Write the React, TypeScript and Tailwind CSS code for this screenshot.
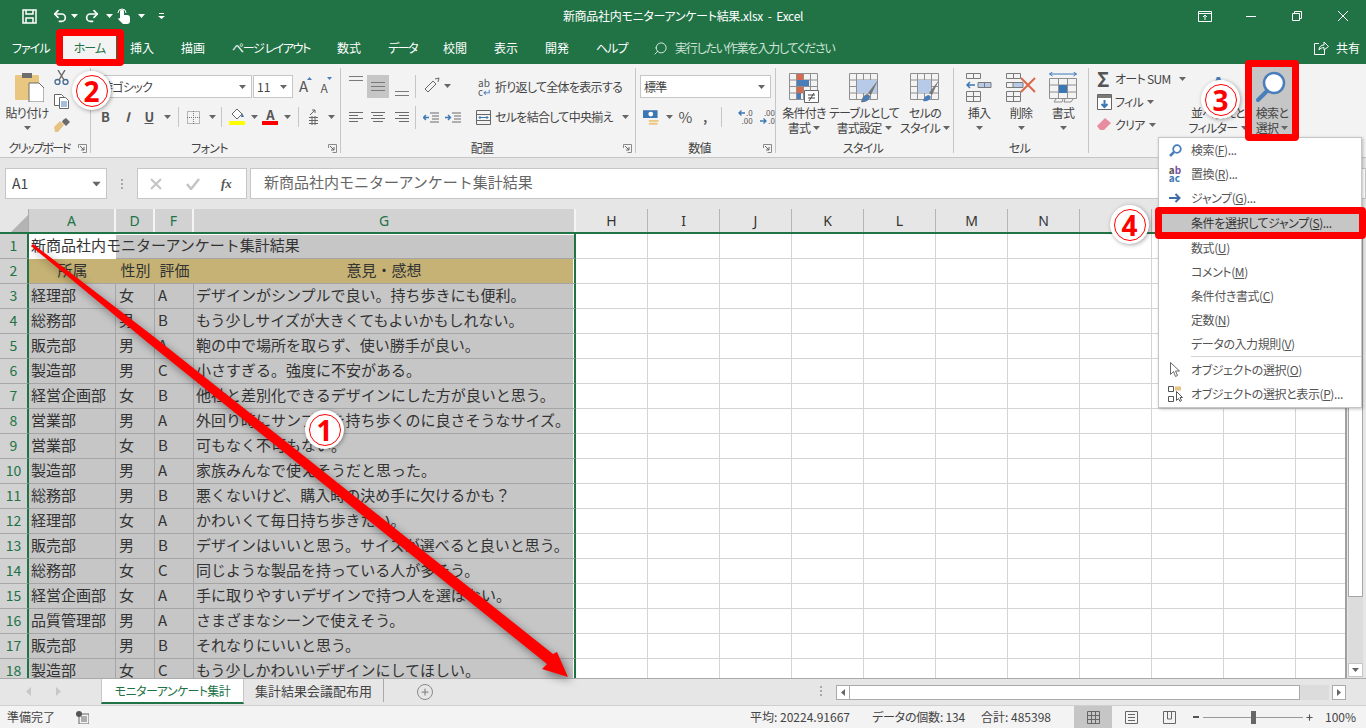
import { ReactNode } from 'react';
import { Undo2, Redo2, Search, Plus } from 'lucide-react';

const jp = '[font-family:"Noto_Sans_CJK_JP","Noto_Sans",sans-serif]';

function Caret({ color = '#666', className = '' }: { color?: string; className?: string }) {
  return (
    <svg width="7" height="4" viewBox="0 0 7 4" className={`shrink-0 ${className}`}>
      <path d="M0 0h7L3.5 4z" fill={color} />
    </svg>
  );
}

function Launcher() {
  return (
    <svg width="9" height="9" viewBox="0 0 9 9" className="shrink-0">
      <path d="M.5 4V.5H8.5V8.5H4.5" fill="none" stroke="#8a8a8a" />
      <path d="M2 2l4 4M6 3v3H3" fill="none" stroke="#666" />
    </svg>
  );
}

function Group({ w, label, labelClass = '', launcher, children }: { w: string; label: string; labelClass?: string; launcher?: boolean; children: ReactNode }) {
  return (
    <div className={`${w} flex h-full shrink-0`}>
      <div className="flex min-w-0 flex-1 flex-col">
        <div className="min-h-0 flex-1">{children}</div>
        <div className="flex h-[18px] items-center pr-[3px]">
          <span className={`flex-1 text-center text-[12px] text-[#444] ${labelClass}`}>{label}</span>
          {launcher && <Launcher />}
        </div>
      </div>
      <div className="my-[4px] w-px bg-[#c6c6c6]" />
    </div>
  );
}

function Line({ w, h = 1, c = '#7a7a7a' }: { w: number; h?: number; c?: string }) {
  return <div style={{ width: w, height: h, backgroundColor: c }} />;
}

// three-line alignment glyph
function AlignIcon({ kind }: { kind: 'left' | 'center' | 'right' }) {
  const xs = kind === 'left' ? [1, 1, 1, 1] : kind === 'center' ? [1, 3, 1, 3] : [1, 5, 1, 5];
  const ws = kind === 'left' ? [14, 9, 14, 9] : kind === 'center' ? [14, 10, 14, 10] : [14, 10, 14, 10];
  return (
    <svg width="16" height="13" viewBox="0 0 16 13">
      {xs.map((x, i) => (
        <rect key={i} x={x} y={1 + i * 3} width={ws[i]} height="1" fill="#6a6a6a" />
      ))}
    </svg>
  );
}

function Qat() {
  return (
    <div className="flex-1">
      <div className="flex items-center pl-[22px] text-white">
        <svg width="15" height="15" viewBox="0 0 15 15" fill="none" stroke="#fff" strokeWidth="1.5">
          <path d="M1 1h13v13H1z" />
          <path d="M4 1v4h7V1M4 14V9h7v5" />
        </svg>
        <Undo2 size={16} strokeWidth={2.5} className="ml-[15px]" />
        <Caret color="#fff" className="ml-[3px]" />
        <Redo2 size={16} strokeWidth={2.5} className="ml-[6px]" />
        <Caret color="#fff" className="ml-[6px]" />
        <svg width="15" height="16" viewBox="0 0 15 16" className="ml-[3px]" fill="#fff">
          <path d="M4 3.500a2 2 0 014 0V7h3a3 3 0 013 3v3a3 3 0 01-3 3H7L2 11l1-1 1 .5z" />
          <path d="M2 5a4 4 0 018 0" fill="none" stroke="#fff" />
        </svg>
        <Caret color="#fff" className="ml-[7px]" />
        <svg width="7" height="6" viewBox="0 0 7 6" className="ml-[13px]">
          <path d="M1 0h5v1H1zM0 3h7L3.5 6z" fill="#fff" />
        </svg>
      </div>
    </div>
  );
}

function WindowButtons() {
  return (
    <div className="flex flex-1 justify-end">
      {[
        <svg key="r" width="14" height="11" viewBox="0 0 14 11" fill="none" stroke="#fff"><path d="M.5.5h13v10H.5zM.5 2.5h13M7 9V4.5M5 6l2-2 2 2" /></svg>,
        <svg key="m" width="10" height="1" viewBox="0 0 10 1"><path d="M0 0h10v1H0z" fill="#fff" /></svg>,
        <svg key="x" width="10" height="10" viewBox="0 0 10 10" fill="none" stroke="#fff"><path d="M.5 2.5h7v7h-7zM2.5 2.5v-2h7v7h-2" /></svg>,
        <svg key="c" width="10" height="10" viewBox="0 0 10 10" fill="none" stroke="#fff"><path d="M0 0l10 10M10 0L0 10" /></svg>,
      ].map((icon, i) => (
        <div key={i} className="flex h-[30px] w-[46px] items-center justify-center">
          {icon}
        </div>
      ))}
    </div>
  );
}

const tabNames = [
  { n: '挿入', w: 'w-[24px]', t: 'tracking-normal' },
  { n: '描画', w: 'w-[24px]', t: 'tracking-normal' },
  { n: 'ページ レイアウト', w: 'w-[78px]', t: 'tracking-[-1.4px]' },
  { n: '数式', w: 'w-[24px]', t: 'tracking-normal' },
  { n: 'データ', w: 'w-[28px]', t: 'tracking-[-1.5px]' },
  { n: '校閲', w: 'w-[24px]', t: 'tracking-normal' },
  { n: '表示', w: 'w-[24px]', t: 'tracking-normal' },
  { n: '開発', w: 'w-[24px]', t: 'tracking-normal' },
  { n: 'ヘルプ', w: 'w-[30px]', t: 'tracking-[-1px]' },
];

function Tabs() {
  return (
    <div className="flex h-[32px] items-center bg-[#217346] text-[12px] text-white">
      <span className="ml-[12px] w-[33px] whitespace-nowrap tracking-[-1px]">ファイル</span>
      <div className="ml-[18px] flex h-[24px] w-[53px] items-center justify-center bg-[#f3f3f3] tracking-[-1px] text-[#217346]">ホーム</div>
      <div className="ml-[14px] flex gap-[27px] whitespace-nowrap">
        {tabNames.map((n) => (
          <span key={n.n} className={`${n.w} ${n.t}`}>{n.n}</span>
        ))}
      </div>
      <Search size={15} strokeWidth={1.5} className="ml-[27px] -scale-x-100 text-[#dfeee6]" />
      <span className="ml-[7px] tracking-[-1.2px] text-[#cfe3d8]">実行したい作業を入力してください</span>
      <div className="ml-auto mr-[6px] flex items-center gap-[7px] tracking-normal">
        <svg width="15" height="14" viewBox="0 0 15 14" fill="none" stroke="#fff">
          <path d="M5 2.5H.5v11h10V9M5 9c0-3 2-5 5-5V1l4.500 4.500L10 9V6.500C8 6.500 6 7.500 5 9z" />
        </svg>
        <span>共有</span>
      </div>
    </div>
  );
}

function ClipboardGroup() {
  return (
    <Group w="w-[91px]" label="クリップボード" labelClass="tracking-[-1.8px]" launcher>
      <div className="flex h-full">
        <div className="flex w-[54px] flex-col items-center pt-[8px]">
          <svg width="29" height="30" viewBox="0 0 29 30" className="ml-[4px]">
            <rect x="0" y="3" width="24" height="25" rx="1" fill="#eac781" />
            <path d="M7 1h10v5H7z" fill="#6d6d6d" />
            <path d="M14 11h10l5 5v14H14z" fill="#fff" stroke="#6d6d6d" />
          </svg>
          <span className="mt-[3px] whitespace-nowrap text-[12px] leading-[16px] text-[#444]">貼り付け</span>
          <Caret className="mt-[5px]" />
        </div>
        <div className="flex flex-col gap-[9px] pt-[6px]">
          <svg width="15" height="15" viewBox="0 0 15 15" fill="none" stroke="#4a6f96" strokeWidth="1.4">
            <circle cx="3.500" cy="12" r="2.500" /><circle cx="11.500" cy="12" r="2.500" />
            <path d="M5 10L11 0M10 10L4 0" stroke="#666" />
          </svg>
          <svg width="15" height="15" viewBox="0 0 15 15" fill="#fff" stroke="#666">
            <path d="M.5.5h7l2 2v9h-9z" />
            <path d="M5.500 3.500h6l3 3v8h-9z" />
            <path d="M7 8h6M7 10h6M7 12h6" stroke="#4a7ebb" />
          </svg>
          <svg width="16" height="14" viewBox="0 0 16 14">
            <path d="M0 9l6-6 4 4-6 7H1z" fill="#e6c283" />
            <path d="M9 2l3-2 4 4-3 3-1 1-4-4z" fill="#6a6a6a" />
          </svg>
        </div>
      </div>
    </Group>
  );
}

function FontGroup() {
  return (
    <Group w="w-[250px]" label="フォント" launcher>
      <div className="flex h-[39px] items-start pl-[9px] pt-[11px]">
        <div className="flex h-[23px] w-[152px] items-center justify-between border border-[#c6c6c6] bg-white pr-[5px] text-[12px] text-[#444]">
          <span>游ゴシック</span>
          <Caret />
        </div>
        <div className="ml-px flex h-[23px] w-[40px] items-center justify-between border border-[#c6c6c6] bg-white px-[3px] pr-[5px] text-[12px] tracking-normal text-[#444]">
          11
          <Caret />
        </div>
        <span className="ml-[6px] text-[15px] leading-[22px] text-[#555]">A</span>
        <svg width="5" height="3" viewBox="0 0 5 3" className="mt-[2px]"><path d="M0 3h5L2.500 0z" fill="#4a7ebb" /></svg>
        <span className="ml-[8px] pt-[3px] text-[12px] leading-[20px] text-[#555]">A</span>
        <svg width="5" height="3" viewBox="0 0 5 3" className="mt-[2px]"><path d="M0 0h5L2.500 3z" fill="#4a7ebb" /></svg>
      </div>
      <div className="flex h-[28px] items-center pl-[3px] text-[#555]">
        <span className="w-[22px] text-center text-[13px] font-bold">B</span>
        <span className="w-[22px] text-center text-[13px] font-bold italic">I</span>
        <span className="w-[22px] text-center text-[13px] font-bold underline">U</span>
        <Caret className="ml-[4px]" />
        <div className="ml-[7px] mr-[8px] h-[20px] w-px bg-[#c6c6c6]" />
        <svg width="13" height="13" viewBox="0 0 13 13" fill="none" stroke="#777" strokeDasharray="1 1"><path d="M.5.5h12v12H.5zM6.500 0v13M0 6.500h13" /></svg>
        <Caret className="ml-[9px]" />
        <div className="ml-[5px] mr-[7px] h-[20px] w-px bg-[#c6c6c6]" />
        <div className="flex flex-col items-center">
          <svg width="16" height="11" viewBox="0 0 16 11"><path d="M3 5l5-5 5 5-5 5z" fill="#fff" stroke="#666" /><path d="M13 4l2 4h-3z" fill="#3c6ea5" /></svg>
          <div className="mt-px h-[4px] w-[16px] bg-[#ffff00]" />
        </div>
        <Caret className="ml-[6px]" />
        <div className="ml-[4px] flex flex-col items-center">
          <span className="text-[13px] font-bold leading-[11px] text-[#555]">A</span>
          <div className="mt-px h-[4px] w-[16px] bg-[#ff0000]" />
        </div>
        <Caret className="ml-[6px]" />
        <div className="ml-[7px] mr-[10px] h-[20px] w-px bg-[#c6c6c6]" />
        <svg width="9" height="16" viewBox="0 0 9 16" fill="none" stroke="#666"><path d="M1 6l5-5M3 1h3v3M0 8.500h9M0 11.500h9M0 14.500h9M3 7v9M6 7v9" /></svg>
        <Caret className="ml-[10px]" />
      </div>
    </Group>
  );
}

function AlignGroup() {
  return (
    <Group w="w-[295px]" label="配置" launcher>
      <div className="flex h-full">
        <div className="flex w-[135px] flex-col pl-[4px]">
          <div className="flex h-[39px] items-start pt-[11px]">
            <div className="flex w-[22px] justify-center pt-[1px]"><div className="flex flex-col gap-[3px]"><Line w={14} /><Line w={14} /></div></div>
            <div className="flex h-[23px] w-[22px] flex-col items-center justify-center gap-[3px] bg-[#c6c6c6]"><Line w={14} /><Line w={14} /><Line w={14} /></div>
            <div className="flex h-[23px] w-[26px] flex-col items-center justify-end gap-[3px] pb-[2px]"><Line w={14} /><Line w={14} /></div>
            <div className="ml-[0px] mr-[7px] h-[23px] w-px bg-[#c6c6c6]" />
            <svg width="17" height="17" viewBox="0 0 17 17" fill="none" stroke="#666" className="mt-[2px]"><path d="M2 12l8-8 3 3-8 8zM12 2l4-1-1 4" /></svg>
            <Caret className="ml-[4px] mt-[9px]" />
          </div>
          <div className="flex h-[28px] items-center">
            <div className="flex w-[22px] justify-center"><AlignIcon kind="left" /></div>
            <div className="flex w-[22px] justify-center"><AlignIcon kind="center" /></div>
            <div className="flex w-[26px] justify-center"><AlignIcon kind="right" /></div>
            <div className="mr-[7px] h-[23px] w-px bg-[#c6c6c6]" />
            <svg width="16" height="11" viewBox="0 0 16 11" fill="none"><path d="M7 1h9M9 4h7M9 7h7M7 10h9" stroke="#6a6a6a" /><path d="M6 5.500H1M3 3L.5 5.500 3 8" stroke="#3c77b5" strokeWidth="1.4" /></svg>
            <svg width="16" height="11" viewBox="0 0 16 11" fill="none" className="ml-[6px]"><path d="M7 1h9M9 4h7M9 7h7M7 10h9" stroke="#6a6a6a" /><path d="M0 5.500h5M3 3l2.500 2.500L3 8" stroke="#3c77b5" strokeWidth="1.4" /></svg>
          </div>
        </div>
        <div className="mt-[8px] flex h-[60px] flex-col">
          <div className="flex h-[30px] items-center whitespace-nowrap pl-[2px] text-[12px] text-[#444]">
            <span className="w-[17px] text-[10px] leading-[9px] tracking-normal text-[#555]">ab<br />c<span className="text-[#3c77b5]">↵</span></span>
            折り返して全体を表示する
          </div>
          <div className="flex h-[30px] items-center whitespace-nowrap text-[12px] text-[#444]">
            <svg width="15" height="15" viewBox="0 0 15 15" fill="none" className="mr-[4px] shrink-0"><path d="M.5.5h14v14H.5zM.5 4.500h14M.5 10.500h14" stroke="#666" /><path d="M3 7.500h9M4.500 6L3 7.500 4.500 9M10.500 6L12 7.500 10.500 9" stroke="#3c77b5" /></svg>
            セルを結合して中央揃え
            <Caret className="ml-[9px]" />
          </div>
        </div>
      </div>
    </Group>
  );
}

function DecimalIcon({ top, bottom, dir }: { top: string; bottom: string; dir: 'l' | 'r' }) {
  return (
    <div className="flex w-[17px] flex-col text-[8px] leading-[8px] tracking-normal text-[#555]">
      <div className="flex items-center justify-end gap-px">
        {dir === 'l' && <svg width="7" height="6" viewBox="0 0 7 6" fill="none" stroke="#3c77b5" strokeWidth="1.3"><path d="M7 3H1M3.500 .5L1 3l2.500 2.500" /></svg>}
        {top}
      </div>
      <div className="flex items-center justify-end gap-px">
        {dir === 'r' && <svg width="7" height="6" viewBox="0 0 7 6" fill="none" stroke="#3c77b5" strokeWidth="1.3"><path d="M0 3h6M3.500 .5L6 3 3.500 5.500" /></svg>}
        {bottom}
      </div>
    </div>
  );
}

function NumberGroup() {
  return (
    <Group w="w-[140px]" label="数値" launcher>
      <div className="flex h-[39px] items-start pl-[4px] pt-[11px]">
        <div className="flex h-[23px] w-[131px] items-center justify-between border border-[#c6c6c6] bg-white px-[3px] pr-[5px] text-[12px] text-[#444]">
          標準
          <Caret />
        </div>
      </div>
      <div className="flex h-[28px] items-center pl-[7px] text-[#555]">
        <svg width="17" height="17" viewBox="0 0 17 17"><rect x="0" y="1" width="15" height="8" fill="#3c77b5" /><circle cx="8" cy="5" r="2.500" fill="#fff" /><path d="M6 11h10v2H6zM6 14h9v2H6z" fill="#ecc57f" /></svg>
        <Caret className="ml-[6px]" />
        <span className="ml-[6px] text-[15px] tracking-normal">%</span>
        <span className="ml-[11px] w-[4px] text-[12px] font-bold leading-none">,</span>
        <div className="mx-[14px] h-[20px] w-px bg-[#c6c6c6]" />
        <DecimalIcon top=".0" bottom=".00" dir="l" />
        <div className="w-[6px]" />
        <DecimalIcon top=".00" bottom=".0" dir="r" />
      </div>
    </Group>
  );
}

function BigButton({ icon, l1, l2, caret = true, w }: { icon: ReactNode; l1: string; l2?: string; caret?: boolean; w: string }) {
  return (
    <div className={`${w} flex flex-col items-center pt-[7px] text-[12px] leading-[15px] text-[#444]`}>
      <div className="flex h-[33px] items-center">{icon}</div>
      <span className="mt-px whitespace-nowrap">{l1}</span>
      <span className="flex items-center gap-[3px] whitespace-nowrap">
        {l2}
        {caret && <Caret className={l2 ? '' : 'mt-[6px]'} />}
      </span>
    </div>
  );
}

function TableIcon({ children }: { children?: ReactNode }) {
  return (
    <svg width="30" height="30" viewBox="0 0 30 30" fill="none">
      <path d="M.5.500h28v26H.5zM.5 7h28M.5 13.500h28M.5 20h28M7.500.500v26M14.500.500v26M21.500.500v26" stroke="#8f8f8f" />
      {children}
    </svg>
  );
}

function StyleGroup() {
  return (
    <Group w="w-[178px]" label="スタイル">
      <div className="flex pl-[3px]">
        <BigButton w="w-[50px]" l1="条件付き" l2="書式" icon={
          <TableIcon>
            <path d="M8 1h6v6H8zM8 14h6v6H8z" fill="#d9694a" />
            <path d="M8 7h12v6H8zM8 20h4v6H8z" fill="#4a7ebb" />
            <path d="M15.500 17.500h14v12h-14z" fill="#fff" stroke="#666" />
            <path d="M19 22h7M19 25h7M25 20l-5 8" stroke="#444" />
          </TableIcon>
        } />
        <BigButton w="w-[70px]" l1="テーブルとして" l2="書式設定" icon={
          <TableIcon>
            <path d="M8 7h20v13H8z" fill="#b7cbe8" />
            <path d="M29 7L19 20l3 2zM19 21c-3 0-6 3-7 8 4 1 9-2 9-6z" fill="#777" />
            <path d="M19 22c-3 0-5 2-6 6 4 1 7-1 8-4z" fill="#4a7ebb" />
          </TableIcon>
        } />
        <BigButton w="w-[52px]" l1="セルの" l2="スタイル" icon={
          <TableIcon>
            <path d="M8 7h13v13H8z" fill="#b7cbe8" />
            <path d="M29 7L19 20l3 2z" fill="#777" />
            <path d="M19 22c-3 0-5 2-6 6 4 1 7-1 8-4z" fill="#4a7ebb" />
          </TableIcon>
        } />
      </div>
    </Group>
  );
}

function CellGroup() {
  const grid = 'M.5 .5h14v5H.5zM7.500 .5v5';
  return (
    <Group w="w-[135px]" label="セル">
      <div className="flex pl-[4px]">
        <BigButton w="w-[42px]" l1="挿入" icon={
          <svg width="26" height="29" viewBox="0 0 26 29" fill="none">
            <path d={grid} stroke="#7a7a7a" />
            <path d="M.5 18.500h14v10H.5zM.5 23.500h14M7.500 18.500v10" stroke="#7a7a7a" />
            <path d="M12 9.500h13v5H12zM18.500 9.500v5" stroke="#7a7a7a" fill="#b7cbe8" />
            <path d="M1 12h8M4 9l-3 3 3 3" stroke="#3c77b5" strokeWidth="1.5" />
          </svg>
        } />
        <BigButton w="w-[42px]" l1="削除" icon={
          <svg width="30" height="29" viewBox="0 0 30 29" fill="none">
            <path d={grid} stroke="#7a7a7a" />
            <path d="M.5 18.500h14v10H.5zM.5 23.500h14M7.500 18.500v10M.5 9.500h7v5H.5z" stroke="#7a7a7a" />
            <path d="M7 9.500h10v5H7z" fill="#b7cbe8" stroke="#7a7a7a" />
            <path d="M15 5l14 14M29 5L15 19" stroke="#d9694a" strokeWidth="2" />
          </svg>
        } />
        <BigButton w="w-[42px]" l1="書式" icon={
          <svg width="28" height="32" viewBox="0 0 28 32" fill="none">
            <path d="M.5 2h27M.5 2l3-2M.5 2l3 2M27.500 2l-3-2M27.500 2l-3 2" stroke="#3c77b5" />
            <path d="M.5 6.500h27v20H.5zM.5 13h27M.5 20h27M9.500 6.500v20M18.500 6.500v20" stroke="#8f8f8f" />
            <path d="M10 13h8v8h-8z" fill="#3c77b5" />
            <path d="M7 27l-2 3h8l1-3M16 27l-1 3h7l2-3" stroke="#8f8f8f" />
          </svg>
        } />
      </div>
    </Group>
  );
}

function EditGroup() {
  return (
    <div className="flex h-full flex-1 pl-[8px] text-[12px] leading-[15px] text-[#444]">
      <div className="flex w-[96px] flex-col pt-[3px]">
        <div className="flex h-[23px] items-center whitespace-nowrap">
          <span className="w-[18px] text-[20px] font-bold text-[#555]">Σ</span>
          オート SUM
          <Caret className="ml-[9px]" />
        </div>
        <div className="flex h-[23px] items-center whitespace-nowrap">
          <svg width="15" height="16" viewBox="0 0 15 16" className="mr-[3px]"><path d="M.5.500h14v15H.5z" fill="#fff" stroke="#666" /><path d="M1 1h13v3H1z" fill="#7a7a7a" /><path d="M7.500 6v7M4.500 10l3 3 3-3" fill="none" stroke="#3c77b5" strokeWidth="2" /></svg>
          フィル
          <Caret className="ml-[4px]" />
        </div>
        <div className="flex h-[23px] items-center whitespace-nowrap">
          <svg width="15" height="13" viewBox="0 0 15 13" className="mr-[3px]"><path d="M0 8l8-8 6 5-7 7H3z" fill="#e88da0" /></svg>
          クリア
          <Caret className="ml-[4px]" />
        </div>
      </div>
      <div className="flex w-[50px] flex-col items-center pt-[7px]">
        <span className="h-[33px] text-[18px] font-bold leading-[24px] text-[#4a7ebb]">A</span>
        <span className="mt-px whitespace-nowrap">並べ替えと</span>
        <span className="flex items-center gap-[3px] whitespace-nowrap">フィルター<Caret /></span>
      </div>
      <div className="ml-[9px] mt-[3px] flex h-[68px] w-[40px] flex-col items-center bg-[#c6c6c6] pt-[3px]">
        <svg width="34" height="34" viewBox="0 0 34 34" fill="none">
          <circle cx="19" cy="13" r="10" fill="#fff" stroke="#4a7ebb" strokeWidth="2.500" />
          <path d="M12 21L3 30" stroke="#4a7ebb" strokeWidth="4" strokeLinecap="round" />
        </svg>
        <span className="mt-[1px] whitespace-nowrap">検索と</span>
        <span className="flex items-center gap-[3px] whitespace-nowrap">選択<Caret /></span>
      </div>
    </div>
  );
}

function FormulaBar() {
  return (
    <div className="flex h-[51px] items-start bg-[#e6e6e6] pl-[5px] pt-[10px] tracking-normal [font-feature-settings:normal]">
      <div className="flex h-[31px] w-[102px] items-center justify-between border border-[#c6c6c6] bg-white px-[6px] text-[14px] text-[#444]">
        A1
        <Caret className="scale-125" />
      </div>
      <div className="ml-[14px] flex h-[31px] flex-col justify-center gap-[2px]">
        <div className="size-[2px] bg-[#a8a8a8]" />
        <div className="size-[2px] bg-[#a8a8a8]" />
        <div className="size-[2px] bg-[#a8a8a8]" />
      </div>
      <div className="ml-[14px] flex h-[31px] w-[110px] items-center border border-[#c6c6c6] bg-white text-[#bdbdbd]">
        <svg width="12" height="12" viewBox="0 0 12 12" className="ml-[12px]" fill="none" stroke="#c4c4c4" strokeWidth="2"><path d="M1 1l10 10M11 1L1 11" /></svg>
        <svg width="14" height="12" viewBox="0 0 14 12" className="ml-[24px]" fill="none" stroke="#c4c4c4" strokeWidth="2.500"><path d="M1 6l4 5 8-10" /></svg>
        <span className="ml-[21px] font-['Liberation_Serif'] text-[13px] font-bold italic text-[#555]">fx</span>
      </div>
      <div className="ml-[3px] flex h-[31px] flex-1 items-center border border-[#c6c6c6] bg-white pb-[2px] pl-[13px] text-[15px] text-[#666]">
        新商品社内モニターアンケート集計結果
      </div>
    </div>
  );
}

const selColumns = [
  { n: 'A', w: 'w-[87px]' },
  { n: 'D', w: 'w-[39px]' },
  { n: 'F', w: 'w-[39px]' },
  { n: 'G', w: 'w-[382px]' },
];
const plainColumns = ['H', 'I', 'J', 'K', 'L', 'M', 'N', 'O', 'P', 'Q'];

const rows: [string, string, string, string][] = [
  ['経理部', '女', 'A', 'デザインがシンプルで良い。持ち歩きにも便利。'],
  ['総務部', '男', 'B', 'もう少しサイズが大きくてもよいかもしれない。'],
  ['販売部', '男', 'A', '鞄の中で場所を取らず、使い勝手が良い。'],
  ['製造部', '男', 'C', '小さすぎる。強度に不安がある。'],
  ['経営企画部', '女', 'B', '他社と差別化できるデザインにした方が良いと思う。'],
  ['営業部', '男', 'A', '外回り時にサンプルを持ち歩くのに良さそうなサイズ。'],
  ['営業部', '女', 'B', '可もなく不可もない。'],
  ['製造部', '男', 'A', '家族みんなで使えそうだと思った。'],
  ['総務部', '男', 'B', '悪くないけど、購入時の決め手に欠けるかも？'],
  ['経理部', '女', 'A', 'かわいくて毎日持ち歩きたい。'],
  ['販売部', '男', 'B', 'デザインはいいと思う。サイズが選べると良いと思う。'],
  ['総務部', '女', 'C', '同じような製品を持っている人が多そう。'],
  ['経営企画部', '女', 'A', '手に取りやすいデザインで持つ人を選ばない。'],
  ['品質管理部', '男', 'A', 'さまざまなシーンで使えそう。'],
  ['販売部', '男', 'B', 'それなりにいいと思う。'],
  ['製造部', '女', 'C', 'もう少しかわいいデザインにしてほしい。'],
];

function Row({ num, children }: { num: number; children: ReactNode }) {
  return (
    <div className="flex h-[25px] shrink-0">
      <div className="flex w-[29px] shrink-0 items-center justify-center border-b border-r-2 border-b-[#a8a8a8] border-r-[#217346] bg-[#d2d2d2] pb-[2px] text-[14px] text-[#217346]">
        {num}
      </div>
      {children}
    </div>
  );
}

function Blanks() {
  return (
    <>
      {plainColumns.map((c) => (
        <div key={c} className="h-full w-[72px] shrink-0 border-b border-r border-[#d4d4d4] bg-white" />
      ))}
      <div className="h-full w-[49px] shrink-0 border-b border-[#d4d4d4] bg-white" />
    </>
  );
}

const selCell = 'flex h-full shrink-0 items-center whitespace-nowrap border-b border-r border-[#a5a5a5] bg-[#c6c6c6] px-[2px] pb-[2px] text-[#333]';
const lastCol = 'border-r-2 border-r-[#217346] shadow-[inset_-1px_0_0_#fff]';

function Sheet() {
  return (
    <div className={`flex min-h-0 flex-1 flex-col overflow-hidden text-[15px] tracking-normal [font-feature-settings:normal] ${jp}`}>
      <div className="flex h-[25px] shrink-0 border-b-2 border-b-[#217346] font-['Noto_Sans'] text-[14px]">
        <div className="flex w-[29px] shrink-0 items-end justify-end border-r border-[#aaa] bg-[#e6e6e6]">
          <div className="size-0 border-b-[17px] border-l-[17px] border-b-[#b4b4b4] border-l-transparent" />
        </div>
        {selColumns.map((c) => (
          <div key={c.n} className={`${c.w} flex shrink-0 items-center justify-center border-r-2 border-[#f4f4f4] bg-[#d2d2d2] text-[#217346]`}>
            {c.n}
          </div>
        ))}
        {plainColumns.map((c) => (
          <div key={c} className="flex w-[72px] shrink-0 items-center justify-center border-r border-[#b5b5b5] bg-[#e6e6e6] text-[#333]">
            {c}
          </div>
        ))}
        <div className="flex-1 bg-[#e6e6e6]" />
      </div>
      <Row num={1}>
        <div className="relative z-10 flex h-full w-[87px] shrink-0 items-center whitespace-nowrap bg-white pb-[2px] pl-[2px] text-[#333]">
          新商品社内モニターアンケート集計結果
        </div>
        <div className={`h-full w-[460px] shrink-0 border-b border-b-[#a5a5a5] bg-[#c6c6c6] shadow-[inset_0_1px_0_#fff] ${lastCol}`} />
        <Blanks />
      </Row>
      <Row num={2}>
        {['所属', '性別', '評価', '意見・感想'].map((t, i) => (
          <div key={t} className={`${i === 0 ? 'w-[87px]' : i === 3 ? `w-[382px] ${lastCol}` : 'w-[39px]'} flex h-full shrink-0 items-center justify-center whitespace-nowrap border-b border-[#a5a5a5] bg-[#c5b274] pb-[2px] text-[#333]`}>
            {t}
          </div>
        ))}
        <Blanks />
      </Row>
      {rows.map((r, i) => (
        <Row key={i} num={i + 3}>
          <div className={`${selCell} w-[87px]`}>{r[0]}</div>
          <div className={`${selCell} w-[39px] pl-[3px]`}>{r[1]}</div>
          <div className={`${selCell} w-[39px] pl-[3px]`}>{r[2]}</div>
          <div className={`${selCell} w-[382px] ${lastCol}`}>{r[3]}</div>
          <Blanks />
        </Row>
      ))}
    </div>
  );
}

function VScroll() {
  return (
    <div className="flex w-[21px] shrink-0 flex-col border-l-2 border-[#a0a0a0] bg-[#e6e6e6] pb-[1px] pl-[1px] pr-[3px] pt-[6px]">
      <div className="flex h-[15px] items-center justify-center border border-[#c6c6c6] bg-white">
        <Caret className="rotate-180" />
      </div>
      <div className="mt-[3px] h-[364px] border border-[#a5a5a5] bg-white" />
      <div className="flex-1 bg-[#dcdcdc]" />
      <div className="flex h-[14px] items-center justify-center border border-[#c6c6c6] bg-white">
        <Caret />
      </div>
    </div>
  );
}

function SheetTabs() {
  return (
    <div className="flex h-[27px] shrink-0 items-start border-t border-[#aaa] bg-[#e6e6e6] text-[12px] text-[#444]">
      <svg width="5" height="9" viewBox="0 0 5 9" className="ml-[26px] mt-[8px]"><path d="M5 0v9L0 4.500z" fill="#c8c8c8" /></svg>
      <svg width="5" height="9" viewBox="0 0 5 9" className="ml-[25px] mt-[8px]"><path d="M0 0v9l5-4.500z" fill="#c8c8c8" /></svg>
      <div className="ml-[40px] flex h-[25px] w-[143px] items-center justify-center whitespace-nowrap border-x border-b-2 border-x-[#c6c6c6] border-b-[#217346] bg-white tracking-[-0.6px] text-[#217346]">
        モニターアンケート集計
      </div>
      <div className="flex h-[23px] w-[140px] items-center justify-center whitespace-nowrap border-r border-[#aaa] text-[13px] tracking-normal">集計結果会議配布用</div>
      <div className="ml-[33px] mt-[5px] flex size-[16px] items-center justify-center rounded-full border border-[#8a8a8a]">
        <Plus size={10} strokeWidth={3} className="text-[#8a8a8a]" />
      </div>
      <div className="ml-[387px] mt-[7px] flex flex-col gap-[2px]">
        <div className="size-[2px] bg-[#a8a8a8]" />
        <div className="size-[2px] bg-[#a8a8a8]" />
        <div className="size-[2px] bg-[#a8a8a8]" />
      </div>
      <div className="ml-[14px] mt-[6px] flex h-[15px] w-[14px] items-center justify-center border border-[#aaa] bg-white">
        <svg width="4" height="7" viewBox="0 0 4 7"><path d="M4 0v7L0 3.500z" fill="#666" /></svg>
      </div>
      <div className="mt-[6px] h-[15px] w-[450px] border border-l-0 border-[#aaa] bg-white" />
      <div className="mt-[6px] h-[15px] w-[29px] bg-[#dcdcdc]" />
      <div className="ml-[3px] mt-[6px] flex h-[15px] w-[14px] items-center justify-center border border-[#aaa] bg-white">
        <svg width="4" height="7" viewBox="0 0 4 7"><path d="M0 0v7l4-3.500z" fill="#666" /></svg>
      </div>
    </div>
  );
}

function StatusBar() {
  return (
    <div className="flex h-[23px] shrink-0 items-center border-t border-[#d0d0d0] bg-[#f3f3f3] text-[12px] tracking-normal text-[#444]">
      <span className="ml-[7px]">準備完了</span>
      <svg width="13" height="13" viewBox="0 0 13 13" className="ml-[21px]"><rect x="3" y="3" width="10" height="10" fill="none" stroke="#666" /><circle cx="3" cy="3" r="3" fill="#555" /><path d="M5 6h6M5 8h6M5 10h6" stroke="#666" /></svg>
      <span className="ml-[661px] w-[122px] whitespace-nowrap">平均: 20224.91667</span>
      <span className="w-[109px] whitespace-nowrap tracking-[-0.2px]">データの個数: 134</span>
      <span className="w-[93px] whitespace-nowrap">合計: 485398</span>
      <div className="flex h-[23px] w-[38px] items-center justify-center bg-[#c6c6c6]">
        <svg width="13" height="13" viewBox="0 0 13 13" fill="none" stroke="#666"><path d="M.5.500h12v12H.5zM4.500 0v13M8.500 0v13M0 4.500h13M0 8.500h13" /></svg>
      </div>
      <div className="flex w-[38px] justify-center">
        <svg width="13" height="13" viewBox="0 0 13 13" fill="none" stroke="#666"><path d="M.5.500h12v12H.5zM3 3.500h7M3 6.500h7M3 9.500h7" /></svg>
      </div>
      <div className="flex w-[38px] justify-center">
        <svg width="13" height="13" viewBox="0 0 13 13" fill="none" stroke="#666"><path d="M.5.500h12v12H.5zM4.500 0v8h4V0" /></svg>
      </div>
      <div className="ml-[5px] h-[2px] w-[6px] bg-[#555]" />
      <div className="ml-[4px] flex h-px w-[100px] items-center justify-center bg-[#999]">
        <div className="h-[13px] w-[5px] bg-[#666]" />
      </div>
      <Plus size={9} strokeWidth={3} className="ml-[2px] text-[#555]" />
      <span className="ml-[11px]">100%</span>
    </div>
  );
}

const menuItems = [
  { t: '検索(', u: 'F', e: ')...' },
  { t: '置換(', u: 'R', e: ')...' },
  { t: 'ジャンプ(', u: 'G', e: ')...' },
  { t: '条件を選択してジャンプ(', u: 'S', e: ')...' },
  { t: '数式(', u: 'U', e: ')' },
  { t: 'コメント(', u: 'M', e: ')' },
  { t: '条件付き書式(', u: 'C', e: ')' },
  { t: '定数(', u: 'N', e: ')' },
  { t: 'データの入力規則(', u: 'V', e: ')' },
  { t: 'オブジェクトの選択(', u: 'O', e: ')' },
  { t: 'オブジェクトの選択と表示(', u: 'P', e: ')...' },
];

function MenuIcon({ i }: { i: number }) {
  if (i === 0) return (
    <svg width="13" height="13" viewBox="0 0 13 13" fill="none" stroke="#4a7ebb"><circle cx="8" cy="5" r="3.800" strokeWidth="1.800" /><path d="M5 8l-4 4" strokeWidth="2.500" /></svg>
  );
  if (i === 1) return (
    <span className="text-[10px] font-bold leading-[8px] tracking-normal text-[#555]">a<span className="text-[#7a4fa3]">b</span><br /><span className="text-[#3c77b5]">ac</span></span>
  );
  if (i === 2) return (
    <svg width="12" height="10" viewBox="0 0 12 10" fill="none" stroke="#3c6ea5" strokeWidth="2"><path d="M0 5h10M6.500 1L10.500 5 6.500 9" /></svg>
  );
  if (i === 9) return (
    <svg width="10" height="15" viewBox="0 0 10 15" fill="#fff" stroke="#666"><path d="M.5.500v12l3-3 2 5 2-1-2-4.500h4z" /></svg>
  );
  if (i === 10) return (
    <svg width="15" height="16" viewBox="0 0 15 16" fill="none" stroke="#555"><path d="M.5.500h5v5h-5zM.5 10.500h5v5h-5z" /><path d="M7 .500h6v4H7z" fill="#e9c27e" stroke="none" /><path d="M8.500 5.500v9l2-2 1.500 3 1.500-1-1.500-3h2.500z" fill="#fff" /></svg>
  );
  return null;
}

function FindMenu() {
  return (
    <div className="absolute left-[1158px] top-[137px] z-20 flex h-[271px] w-[204px] flex-col border border-[#c6c6c6] bg-white text-[12px] tracking-[-0.4px] text-[#555] shadow-[1px_1px_3px_rgba(0,0,0,0.25)]">
      {menuItems.map((m, i) => (
        <div key={m.t}>
          {i === 9 && <div className="ml-[32px] h-px bg-[#d4d4d4]" />}
          <div className={`flex items-center whitespace-nowrap ${i === 3 || i === 4 || i === 9 ? 'h-[25px]' : 'h-[24px]'} ${i === 3 ? 'bg-[#c6c6c6] text-[#333]' : ''}`}>
            <div className="flex w-[32px] justify-center"><MenuIcon i={i} /></div>
            <span>{m.t}<span className="underline">{m.u}</span>{m.e}</span>
          </div>
        </div>
      ))}
    </div>
  );
}

function Badge({ n, pos }: { n: number; pos: string }) {
  return (
    <div className={`absolute ${pos} z-40 flex size-[39px] items-center justify-center rounded-full bg-white shadow-[1px_1px_4px_rgba(0,0,0,0.35)]`}>
      <div className="flex size-[32px] items-center justify-center rounded-full border-[1.5px] border-[#ff0000] font-['Noto_Sans'] text-[28px] font-bold leading-none tracking-normal text-[#ff0000]">
        {n}
      </div>
    </div>
  );
}

function RedBox({ pos }: { pos: string }) {
  return <div className={`absolute ${pos} z-30 rounded-[4px] border-[7px] border-[#ff0000]`} />;
}

export default function App() {
  return (
    <div className={`relative flex h-[728px] w-[1366px] flex-col overflow-hidden bg-[#f3f3f3] tracking-[-0.7px] [font-feature-settings:"palt"] ${jp}`}>
      <div className="flex h-[32px] shrink-0 items-center bg-[#217346] text-[12px] text-white">
        <Qat />
        <span className="whitespace-nowrap tracking-[-0.3px]">新商品社内モニターアンケート結果.xlsx&nbsp; - &nbsp;Excel</span>
        <WindowButtons />
      </div>
      <Tabs />
      <div className="flex h-[94px] shrink-0 border-b border-[#c6c6c6] bg-[#f3f3f3]">
        <ClipboardGroup />
        <FontGroup />
        <AlignGroup />
        <NumberGroup />
        <StyleGroup />
        <CellGroup />
        <EditGroup />
      </div>
      <FormulaBar />
      <div className="flex min-h-0 flex-1">
        <Sheet />
        <VScroll />
      </div>
      <SheetTabs />
      <StatusBar />

      <FindMenu />

      <RedBox pos="left-[56px] top-[29px] h-[37px] w-[68px]" />
      <RedBox pos="left-[1245px] top-[60px] h-[81px] w-[54px]" />
      <RedBox pos="left-[1155px] top-[207px] h-[32px] w-[211px]" />

      <svg width="1366" height="728" className="pointer-events-none absolute left-0 top-0 z-30 drop-shadow-[3px_4px_4px_rgba(0,0,0,0.4)]">
        <polygon points="33,244 153,336 553,654 557,652 568,677 542,669 547,664 147,342 31,246" fill="#ff0000" />
      </svg>

      <Badge n={1} pos="left-[305px] top-[410px]" />
      <Badge n={2} pos="left-[72px] top-[71px]" />
      <Badge n={3} pos="left-[1201px] top-[80px]" />
      <Badge n={4} pos="left-[1110px] top-[205px]" />
    </div>
  );
}
